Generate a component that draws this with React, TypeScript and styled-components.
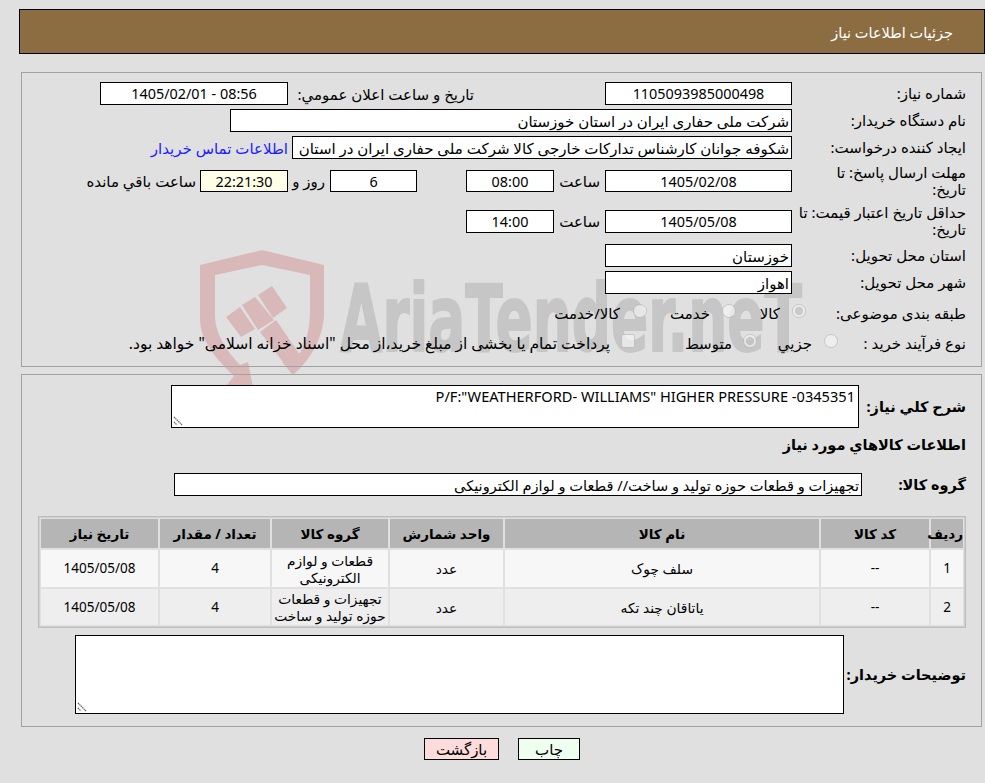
import React from "react";
import styled, { createGlobalStyle } from "styled-components";

const GlobalStyle = createGlobalStyle`
  html, body {
    margin: 0;
    padding: 0;
    background: #e0e0e0;
  }
  body {
    font-family: "Noto Sans", "DejaVu Sans", sans-serif;
    font-size: 15px;
    color: #000;
  }
`;

const Page = styled.div`
  position: relative;
  width: 985px;
  height: 783px;
  overflow: hidden;
  box-sizing: border-box;
  padding-top: 9px;
  display: flex;
  flex-direction: column;
  align-items: flex-start;
`;

const Watermark = styled.svg`
  position: absolute;
  left: 190px;
  top: 240px;
  width: 630px;
  height: 160px;
`;

const Header = styled.div`
  position: relative;
  width: 966px;
  height: 45px;
  box-sizing: border-box;
  background: #8c6d42;
  border: 1px solid #000;
  color: #fff;
  display: flex;
  align-items: center;
  padding-right: 31px;
  font-size: 14.5px;
`;

const Panel = styled.section<{ $top: number }>`
  position: relative;
  width: 961px;
  margin-top: ${(p) => p.$top}px;
  margin-right: 3px;
  box-sizing: border-box;
  border: 1px solid #a2a2a2;
  padding: 9px 15px 12px 0;
  display: flex;
  flex-direction: column;
  gap: 4px;
`;

const Row = styled.div<{ $h?: number; $top?: number }>`
  display: flex;
  align-items: center;
  min-height: ${(p) => p.$h ?? 23}px;
  margin-top: ${(p) => p.$top ?? 0}px;
`;

const Label = styled.label<{ $w?: number; $bold?: boolean }>`
  width: ${(p) => p.$w ?? 174}px;
  flex: none;
  box-sizing: border-box;
  line-height: 17px;
  font-weight: ${(p) => (p.$bold ? 700 : 400)};
  font-size: ${(p) => (p.$bold ? 14.5 : 15)}px;
  white-space: nowrap;
`;

const Box = styled.input<{ $w: number; $h?: number; $bg?: string; $center?: boolean; $after?: number; $fs?: number }>`
  width: ${(p) => p.$w}px;
  height: ${(p) => p.$h ?? 23}px;
  flex: none;
  box-sizing: border-box;
  margin: 0 0 0 ${(p) => p.$after ?? 0}px;
  padding: 0 2px;
  border: 1px solid #000;
  border-radius: 0;
  outline: none;
  background: ${(p) => p.$bg ?? "#fff"};
  color: #000;
  font: inherit;
  font-size: ${(p) => p.$fs ?? (p.$center ? 14.4 : 15)}px;
  text-align: ${(p) => (p.$center ? "center" : "right")};
`;

const Text = styled.span<{ $after?: number; $w?: number; $fs?: number }>`
  flex: none;
  width: ${(p) => (p.$w ? `${p.$w}px` : "auto")};
  margin-left: ${(p) => p.$after ?? 0}px;
  font-size: ${(p) => p.$fs ?? 15}px;
  white-space: nowrap;
`;

const ContactLink = styled.a`
  flex: none;
  margin-right: 4px;
  color: #2020ff;
  font-size: 15px;
  white-space: nowrap;
`;

const Choice = styled.input<{ $right: number; $left: number }>`
  flex: none;
  width: 14px;
  height: 14px;
  margin: -5px ${(p) => p.$right}px 0 ${(p) => p.$left}px;
`;

const AreaWrap = styled.div`
  position: relative;
  flex: none;
  display: flex;
`;

const Area = styled.textarea<{ $w: number; $h: number }>`
  width: ${(p) => p.$w}px;
  height: ${(p) => p.$h}px;
  box-sizing: border-box;
  margin: 0;
  padding: 2px 3px;
  border: 1px solid #000;
  border-radius: 0;
  outline: none;
  resize: none;
  background: #fff;
  color: #000;
  font: inherit;
  font-size: 14.6px;
  line-height: 17px;
  text-align: right;
`;

const Grip = styled.svg`
  position: absolute;
  left: 2px;
  bottom: 2px;
  width: 10px;
  height: 10px;
`;

const Heading = styled.div`
  font-size: 14.5px;
  font-weight: 700;
  line-height: 17px;
  margin: 4px 0 16px;
`;

const ItemsTable = styled.table`
  width: 928px;
  margin: 16px 0 3px;
  table-layout: fixed;
  border-collapse: separate;
  border-spacing: 2px;
  border: 1px solid #bdbdbd;
  outline: 1px solid #cfcfcf;
  outline-offset: -2px;
`;

const HeadCell = styled.th<{ $w: number }>`
  width: ${(p) => p.$w}px;
  height: 29px;
  padding: 0;
  background: #b5b5b5;
  font-size: 13.5px;
  font-weight: 700;
  text-align: center;
`;

const Cell = styled.td<{ $alt?: boolean; $num?: boolean }>`
  height: ${(p) => (p.$alt ? 36 : 37)}px;
  padding: 0;
  background: ${(p) => (p.$alt ? "#eeeeee" : "#f7f7f7")};
  font-size: ${(p) => (p.$num ? 13.5 : 13.8)}px;
  line-height: 17px;
  text-align: center;
`;

const Actions = styled.div`
  position: relative;
  width: 985px;
  margin-top: 11px;
  padding-right: 405px;
  box-sizing: border-box;
  display: flex;
  gap: 19px;
`;

const ActionButton = styled.button<{ $w: number; $bg: string }>`
  width: ${(p) => p.$w}px;
  height: 22px;
  padding: 0;
  border: 1px solid #000;
  border-radius: 0;
  background: ${(p) => p.$bg};
  color: #000;
  font: inherit;
  font-size: 15px;
`;

const columns = [
  { title: "ردیف", w: 32 },
  { title: "کد کالا", w: 108 },
  { title: "نام کالا", w: 314 },
  { title: "واحد شمارش", w: 113 },
  { title: "گروه کالا", w: 116 },
  { title: "تعداد / مقدار", w: 110 },
  { title: "تاریخ نیاز", w: 117 },
];

const items = [
  { id: "1", code: "--", name: "سلف چوک", unit: "عدد", group: "قطعات و لوازم الکترونیکی", count: "4", date: "1405/05/08" },
  { id: "2", code: "--", name: "یاتاقان چند تکه", unit: "عدد", group: "تجهیزات و قطعات حوزه تولید و ساخت", count: "4", date: "1405/05/08" },
];

const noop = () => {};

const ResizeGrip: React.FC = () => (
  <Grip viewBox="0 0 10 10" aria-hidden="true">
    <path d="M1 1 L9 9 M1 6 L4 9" stroke="#666" strokeWidth="1.3" strokeDasharray="1.4 0.6" fill="none" />
  </Grip>
);

const App: React.FC = () => {
  return (
    <Page dir="rtl">
      <GlobalStyle />
      <Watermark viewBox="190 240 630 160" aria-hidden="true">
        <path
          fill="#d9b8ba"
          fillRule="evenodd"
          d="M200 265 L262 250 L324 265 L324 317 Q321 350 293 375 L282 362 L300 353 Q310 335 310 313 L310 275 L262 265 L215 275 L215 317 Q216 340 240 365 L248 362 L253 387 L227 385 L234 376 Q200 345 200 320 Z"
        />
        <path fill="#d9b8ba" d="M226 317 L240 307 L255 329 L241 337 Z" />
        <path fill="#d9b8ba" d="M242 305 L255 297 L274 320 L258 330 Z" />
        <path fill="#d9b8ba" d="M258 295 L272 286 L287 308 L273 318 Z" />
        <path fill="#d9b8ba" d="M260 332 L276 320 L300 355 L293 375 Z" />
        <text
          x="340"
          y="351"
          textLength="462"
          lengthAdjust="spacingAndGlyphs"
          fontFamily="'DejaVu Sans', sans-serif"
          fontWeight="700"
          fontSize="92"
          fill="#c6c6c6"
          stroke="#c6c6c6"
          strokeWidth="2"
          strokeLinejoin="round"
          direction="ltr"
        >
          AriaTender.neT
        </text>
      </Watermark>

      <Header>جزئیات اطلاعات نیاز</Header>

      <Panel $top={18}>
        <Row>
          <Label>شماره نیاز:</Label>
          <Box $w={187} $center readOnly value="1105093985000498" $after={131} />
          <Text $w={182} $after={4}>تاریخ و ساعت اعلان عمومي:</Text>
          <Box $w={188} $center readOnly value="08:56 - 1405/02/01" />
        </Row>
        <Row>
          <Label>نام دستگاه خریدار:</Label>
          <Box $w={562} readOnly value="شرکت ملی حفاری ایران در استان خوزستان" />
        </Row>
        <Row>
          <Label>ایجاد کننده درخواست:</Label>
          <Box $w={500} readOnly value="شکوفه جوانان کارشناس تدارکات خارجی کالا شرکت ملی حفاری ایران در استان خوزستان" />
          <ContactLink>اطلاعات تماس خریدار</ContactLink>
        </Row>
        <Row $h={36}>
          <Label>مهلت ارسال پاسخ: تا<br />تاریخ:</Label>
          <Box $w={187} $h={22} $center readOnly value="1405/02/08" $after={5} />
          <Text $w={41} $after={5}>ساعت</Text>
          <Box $w={88} $h={22} $center readOnly value="08:00" $after={49} />
          <Box $w={87} $h={22} $center readOnly value="6" $after={5} />
          <Text $w={28} $after={9}>روز و</Text>
          <Box $w={88} $h={22} $bg="#ffffe8" $center readOnly value="22:21:30" $after={4} />
          <Text>ساعت باقي مانده</Text>
        </Row>
        <Row $h={36}>
          <Label>حداقل تاریخ اعتبار قیمت: تا<br />تاریخ:</Label>
          <Box $w={187} $center readOnly value="1405/05/08" $after={5} />
          <Text $w={41} $after={5}>ساعت</Text>
          <Box $w={88} $center readOnly value="14:00" />
        </Row>
        <Row $top={1}>
          <Label>استان محل تحویل:</Label>
          <Box $w={187} readOnly value="خوزستان" />
        </Row>
        <Row>
          <Label>شهر محل تحویل:</Label>
          <Box $w={187} readOnly value="اهواز" />
        </Row>
        <Row $h={30}>
          <Label>طبقه بندی موضوعی:</Label>
          <Choice type="radio" disabled checked onChange={noop} $right={-14} $left={12} />
          <Text $w={20}>کالا</Text>
          <Choice type="radio" disabled onChange={noop} $right={24} $left={12} />
          <Text $w={39}>خدمت</Text>
          <Choice type="radio" disabled onChange={noop} $right={24} $left={13} />
          <Text>کالا/خدمت</Text>
        </Row>
        <Row $h={22}>
          <Label>نوع فرآیند خرید :</Label>
          <Choice type="radio" disabled onChange={noop} $right={-46} $left={12} />
          <Text $w={34}>جزیي</Text>
          <Choice type="radio" disabled checked onChange={noop} $right={21} $left={11} />
          <Text $w={45}>متوسط</Text>
          <Choice type="checkbox" disabled onChange={noop} $right={52} $left={11} />
          <Text $fs={15.5}>پرداخت تمام یا بخشی از مبلغ خرید،از محل "اسناد خزانه اسلامی" خواهد بود.</Text>
        </Row>
      </Panel>

      <Panel $top={7}>
        <Row $h={42} $top={1}>
          <Label $w={107} $bold>شرح كلي نياز:</Label>
          <AreaWrap>
            <Area
              $w={688}
              $h={43}
              readOnly
              value={'P/F:"WEATHERFORD- WILLIAMS" HIGHER PRESSURE -0345351'}
              dir="ltr"
            />
            <ResizeGrip />
          </AreaWrap>
        </Row>
        <Heading>اطلاعات كالاهاي مورد نياز</Heading>
        <Row>
          <Label $w={104} $bold>گروه کالا:</Label>
          <Box $w={688} $fs={14.6} readOnly value="تجهیزات و قطعات حوزه تولید و ساخت// قطعات و لوازم الکترونیکی" />
        </Row>
        <ItemsTable>
          <thead>
            <tr>
              {columns.map((c) => (
                <HeadCell key={c.title} $w={c.w}>{c.title}</HeadCell>
              ))}
            </tr>
          </thead>
          <tbody>
            {items.map((item, i) => (
              <tr key={item.id}>
                <Cell $alt={i === 1} $num>{item.id}</Cell>
                <Cell $alt={i === 1} $num>{item.code}</Cell>
                <Cell $alt={i === 1}>{item.name}</Cell>
                <Cell $alt={i === 1}>{item.unit}</Cell>
                <Cell $alt={i === 1}>{item.group}</Cell>
                <Cell $alt={i === 1} $num>{item.count}</Cell>
                <Cell $alt={i === 1} $num>{item.date}</Cell>
              </tr>
            ))}
          </tbody>
        </ItemsTable>
        <Row>
          <Label $w={122} $bold>توضیحات خریدار:</Label>
          <AreaWrap>
            <Area $w={769} $h={79} readOnly value="" />
            <ResizeGrip />
          </AreaWrap>
        </Row>
      </Panel>

      <Actions>
        <ActionButton $w={62} $bg="#efffef">چاب</ActionButton>
        <ActionButton $w={75} $bg="#ffdcdc">بازگشت</ActionButton>
      </Actions>
    </Page>
  );
};

export default App;
